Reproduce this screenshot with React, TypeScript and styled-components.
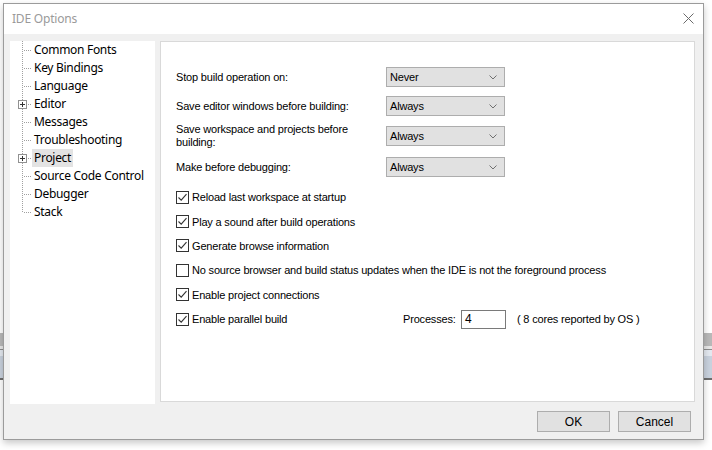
import styled, { createGlobalStyle } from 'styled-components';

const GlobalStyle = createGlobalStyle`
  html, body {
    margin: 0;
    padding: 0;
    background: #ffffff;
  }
  * {
    box-sizing: border-box;
  }
`;

interface TreeNode {
  label:     string;
  expand?:   boolean;
  selected?: boolean;
}

const TREE: TreeNode[] = [
  { label: 'Common Fonts' },
  { label: 'Key Bindings' },
  { label: 'Language' },
  { label: 'Editor', expand: true },
  { label: 'Messages' },
  { label: 'Troubleshooting' },
  { label: 'Project', expand: true, selected: true },
  { label: 'Source Code Control' },
  { label: 'Debugger' },
  { label: 'Stack' },
];

const FIELDS = [
  { label: 'Stop build operation on:', value: 'Never' },
  { label: 'Save editor windows before building:', value: 'Always' },
  { label: 'Save workspace and projects before building:', value: 'Always', tall: true },
  { label: 'Make before debugging:', value: 'Always' },
];

const CHECKS = [
  { label: 'Reload last workspace at startup', checked: true },
  { label: 'Play a sound after build operations', checked: true },
  { label: 'Generate browse information', checked: true },
  { label: 'No source browser and build status updates when the IDE is not the foreground process', checked: false },
  { label: 'Enable project connections', checked: true },
];

const CloseIcon = () => (
  <svg width="11" height="11" viewBox="0 0 11 11">
    <path d="M0.5 0.5 L10.5 10.5 M10.5 0.5 L0.5 10.5" stroke="#6b6b6b" strokeWidth="1" fill="none" />
  </svg>
);

const Chevron = () => (
  <svg width="8" height="5" viewBox="0 0 8 5">
    <path d="M0.5 0.5 L4 4 L7.5 0.5" stroke="#707070" strokeWidth="1" fill="none" />
  </svg>
);

const CheckMark = () => (
  <svg width="11" height="11" viewBox="0 0 11 11">
    <path d="M1.5 5.5 L4.2 8.2 L9.5 2.2" stroke="#333333" strokeWidth="1.1" fill="none" />
  </svg>
);

const CheckBox = ({ checked }: { checked: boolean }) => (
  <StyledCheckBox>{checked && <CheckMark />}</StyledCheckBox>
);

const App = () => {
  return (
    <>
      <GlobalStyle />
      <StyledDesktop>
        <StyledDialog>
          <StyledTitleBar>
            <StyledTitle>IDE Options</StyledTitle>
            <StyledCloseBtn>
              <CloseIcon />
            </StyledCloseBtn>
          </StyledTitleBar>

          <StyledBody>
            <StyledMain>
              <StyledTree>
                {TREE.map((n, i) => (
                  <StyledTreeRow key={n.label}>
                    <StyledConnector $last={i === TREE.length - 1}>
                      {n.expand && <StyledPlusBox />}
                    </StyledConnector>
                    <StyledTreeLabel $selected={!!n.selected}>{n.label}</StyledTreeLabel>
                  </StyledTreeRow>
                ))}
              </StyledTree>

              <StyledPanel>
                <StyledFieldList>
                  {FIELDS.map((f) => (
                    <StyledFieldRow key={f.label} $tall={!!f.tall}>
                      <StyledFieldLabel>{f.label}</StyledFieldLabel>
                      <StyledSelect>
                        <span>{f.value}</span>
                        <Chevron />
                      </StyledSelect>
                    </StyledFieldRow>
                  ))}
                </StyledFieldList>

                <StyledCheckList>
                  {CHECKS.map((c) => (
                    <StyledCheckRow key={c.label}>
                      <CheckBox checked={c.checked} />
                      <StyledCheckText>{c.label}</StyledCheckText>
                    </StyledCheckRow>
                  ))}
                  <StyledCheckRow>
                    <CheckBox checked />
                    <StyledCheckText $width={211}>Enable parallel build</StyledCheckText>
                    <StyledProcLabel>Processes:</StyledProcLabel>
                    <StyledProcInput>4</StyledProcInput>
                    <StyledCoresText>( 8 cores reported by OS )</StyledCoresText>
                  </StyledCheckRow>
                </StyledCheckList>
              </StyledPanel>
            </StyledMain>

            <StyledFooter>
              <StyledButton>OK</StyledButton>
              <StyledButton>Cancel</StyledButton>
            </StyledFooter>
          </StyledBody>
        </StyledDialog>
      </StyledDesktop>
    </>
  );
};

export default App;

const StyledDesktop = styled.div`
  width: 712px;
  height: 450px;
  padding: 3px 0 0 3px;
  overflow: hidden;
  background:
    linear-gradient(
      to bottom,
      #ffffff 0 333px,
      #b9b9b9 333px 346px,
      #e8e8e8 346px 349px,
      #8c8c8c 349px 350px,
      #e4e9f0 350px 356px,
      #c9d2de 356px 378px,
      #6e6e6e 378px 380px,
      #ffffff 380px
    );
`;

const StyledDialog = styled.div`
  width: 701px;
  height: 437px;
  display: flex;
  flex-direction: column;
  border: 1px solid #9b9b9b;
  background: #f0f0f0;
  box-shadow: 0 3px 7px rgba(0, 0, 0, 0.22);
`;

const StyledTitleBar = styled.div`
  height: 30px;
  display: flex;
  align-items: center;
  justify-content: space-between;
  padding: 0 9px 0 8px;
  background: #ffffff;
`;

const StyledTitle = styled.div`
  font-family: 'Noto Sans', 'Open Sans', sans-serif;
  font-size: 12px;
  letter-spacing: -0.2px;
  color: #9a9a9a;
  margin-top: -1px;
`;

const StyledCloseBtn = styled.div`
  display: flex;
  align-items: center;
  margin-top: -1px;
`;

const StyledBody = styled.div`
  flex: 1;
  display: flex;
  flex-direction: column;
  padding: 7px 8px 7px 6px;
`;

const StyledMain = styled.div`
  display: flex;
  gap: 5px;
  height: 363px;
`;

const StyledTree = styled.ul`
  width: 145px;
  margin: 0;
  padding: 0;
  list-style: none;
  background: #ffffff;
`;

const StyledTreeRow = styled.li`
  display: flex;
  align-items: center;
  height: 18px;
`;

const StyledConnector = styled.span<{ $last: boolean }>`
  position: relative;
  width: 22px;
  height: 18px;
  flex-shrink: 0;
  &::before {
    content: '';
    position: absolute;
    left: 12px;
    top: 0;
    width: 1px;
    height: ${({ $last }) => ($last ? '10px' : '18px')};
    background: repeating-linear-gradient(to bottom, #a0a0a0 0 1px, transparent 1px 2px);
  }
  &::after {
    content: '';
    position: absolute;
    left: 13px;
    top: 9px;
    width: 9px;
    height: 1px;
    background: repeating-linear-gradient(to right, transparent 0 1px, #a0a0a0 1px 2px);
  }
`;

const StyledPlusBox = styled.span`
  position: absolute;
  left: 8px;
  top: 5px;
  width: 9px;
  height: 9px;
  z-index: 1;
  border: 1px solid #919191;
  background:
    linear-gradient(#333, #333) center / 5px 1px no-repeat,
    linear-gradient(#333, #333) center / 1px 5px no-repeat,
    #ffffff;
`;

const StyledTreeLabel = styled.span<{ $selected: boolean }>`
  height: 18px;
  line-height: 18px;
  padding: 0 2px;
  font-family: 'Noto Sans', 'Open Sans', sans-serif;
  font-size: 12px;
  letter-spacing: -0.3px;
  color: #000000;
  white-space: nowrap;
  background: ${({ $selected }) => ($selected ? '#e3e3e3' : 'transparent')};
`;

const StyledPanel = styled.div`
  flex: 1;
  height: 361px;
  padding: 25px 0 0 15px;
  border: 1px solid #d9d9d9;
  background: #ffffff;
  font-family: 'Liberation Sans', Arial, sans-serif;
  font-size: 11px;
  letter-spacing: -0.18px;
  color: #000000;
`;

const StyledFieldList = styled.div`
  display: flex;
  flex-direction: column;
  gap: 9px;
`;

const StyledFieldRow = styled.div<{ $tall: boolean }>`
  display: flex;
  align-items: center;
  min-height: 20px;
  margin: ${({ $tall }) => ($tall ? '-2px 0 -1px' : '0')};
`;

const StyledFieldLabel = styled.div`
  width: 210px;
  line-height: 13px;
  padding-right: 30px;
`;

const StyledSelect = styled.div`
  width: 119px;
  height: 20px;
  display: flex;
  align-items: center;
  justify-content: space-between;
  padding: 0 7px 0 3px;
  border: 1px solid #adadad;
  background: #e1e1e1;
`;

const StyledCheckList = styled.div`
  display: flex;
  flex-direction: column;
  margin-top: 8px;
`;

const StyledCheckRow = styled.div`
  display: flex;
  align-items: center;
  height: 24.4px;
`;

const StyledCheckBox = styled.span`
  width: 13px;
  height: 13px;
  flex-shrink: 0;
  display: flex;
  align-items: center;
  justify-content: center;
  border: 1px solid #333333;
  background: #ffffff;
`;

const StyledCheckText = styled.span<{ $width?: number }>`
  margin-left: 3px;
  white-space: nowrap;
  width: ${({ $width }) => ($width ? `${$width}px` : 'auto')};
`;

const StyledProcLabel = styled.span`
  width: 58px;
`;

const StyledProcInput = styled.div`
  width: 45px;
  height: 19px;
  display: flex;
  align-items: center;
  padding-left: 3px;
  font-size: 12px;
  border: 1px solid #7a7a7a;
  background: #ffffff;
`;

const StyledCoresText = styled.span`
  margin-left: 11px;
`;

const StyledFooter = styled.div`
  display: flex;
  justify-content: flex-end;
  gap: 8px;
  padding: 7px 4px 0 0;
`;

const StyledButton = styled.button`
  width: 73px;
  height: 21px;
  padding: 0;
  border: 1px solid #adadad;
  background: #e1e1e1;
  font-family: 'Liberation Sans', Arial, sans-serif;
  font-size: 12px;
  color: #000000;
`;
